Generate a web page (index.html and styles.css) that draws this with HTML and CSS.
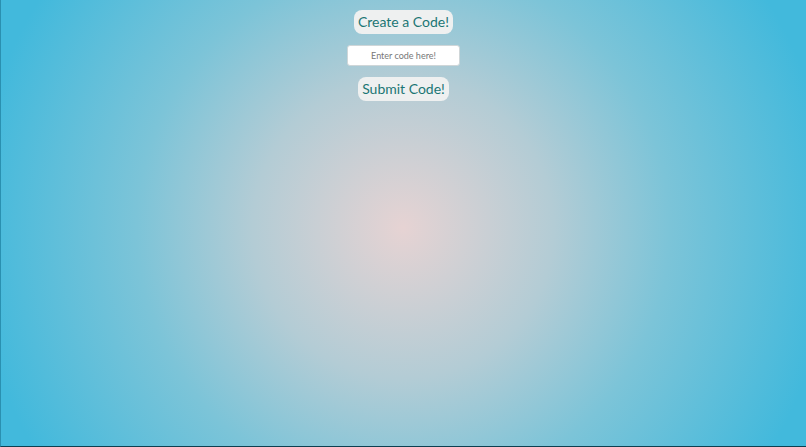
FILE: index.html
```html
<!DOCTYPE html>
<html>
<head>
<meta charset="utf-8">
<link rel="stylesheet" href="styles.css">
</head>
<body>
<div class="page">
  <button class="btn">Create a Code!</button>
  <input class="code-input" type="text" placeholder="Enter code here!">
  <button class="btn">Submit Code!</button>
</div>
</body>
</html>
```
FILE: styles.css
```css
html, body {
  margin: 0;
  padding: 0;
  height: 100%;
}
body {
  background: radial-gradient(circle 430px at 50% 51%, #e6d3d3 0%, #b3ccd5 35%, #7cc4d8 62%, #42b9dc 100%);
  background-color: #42b9dc;
  font-family: "Lato", "DejaVu Sans", sans-serif;
  box-sizing: border-box;
  border-left: 1px solid #2a90b0;
  border-bottom: 1px solid #0d3f50;
}
.page {
  display: flex;
  flex-direction: column;
  align-items: center;
  padding-top: 10px;
}
.btn {
  font-family: "Lato", sans-serif;
  font-size: 14px;
  color: #1b7674;
  background: #eef0f0;
  border: none;
  border-radius: 8px;
  padding: 0 4px;
  height: 24px;
  line-height: 24px;
}
.code-input {
  margin-top: 11px;
  margin-bottom: 11px;
  width: 113px;
  height: 21px;
  box-sizing: border-box;
  border: 1px solid #cfd6d8;
  border-radius: 3px;
  background: #fff;
  text-align: center;
  font-family: "Lato", sans-serif;
  font-size: 9px;
  padding: 0;
}
.code-input::placeholder {
  color: #777;
}
```
